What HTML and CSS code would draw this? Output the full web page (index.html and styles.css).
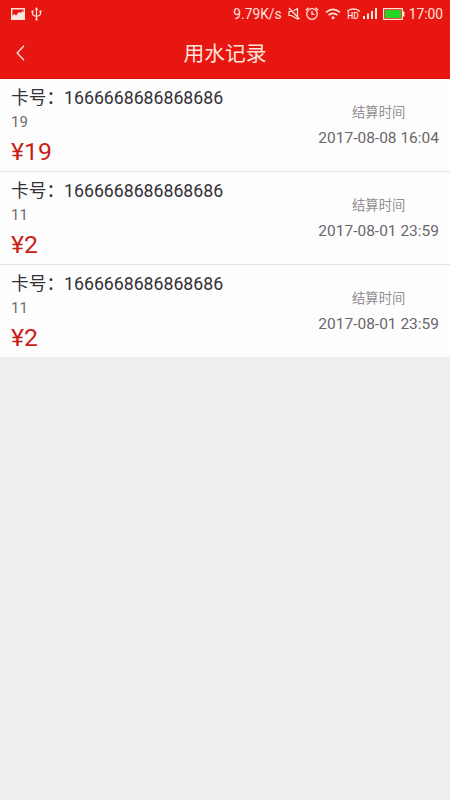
FILE: index.html
```html
<!DOCTYPE html>
<html lang="zh-CN">
<head>
<meta charset="utf-8">
<meta name="viewport" content="width=device-width, initial-scale=1">
<title>用水记录</title>
<link rel="stylesheet" href="styles.css">
</head>
<body>
<header class="top">
  <div class="status">
    <svg class="i-photo" width="14" height="12" viewBox="0 0 14 12"><path d="M.7.7h12.6v10.6H.7z" fill="none" stroke="currentColor" stroke-width="1.4"/><path d="M1 11V8l2.500-2 1.500 1.500 3-3.500 1.500 1 2-2L13 4.500V11z" fill="currentColor"/></svg>
    <svg class="i-usb" width="11" height="14" viewBox="0 0 11 14" fill="none" stroke="currentColor" stroke-width="1.200"><path d="M5.500 2v10M1.500 4.500v2.300q0 1.200 1.500 1.700l2.500 1L8 8.500q1.500-.5 1.500-1.700V4.500"/><path d="M5.500 0l1.700 2.700H3.800zM.5 3.500h2v2h-2zM8.500 3.500h2v2h-2zM4.500 11.500h2v2h-2z" fill="currentColor" stroke="none"/></svg>
    <span class="speed">9.79K/s</span>
    <svg class="i-mute" width="12" height="13" viewBox="0 0 12 13" fill="none" stroke="currentColor" stroke-width="1.200"><path d="M3.500 4.500H1v4h2.500L9.500 12V1.500L5.500 3.800M1 1l10.500 11"/></svg>
    <svg class="i-alarm" width="14" height="13" viewBox="0 0 14 13" fill="none" stroke="currentColor" stroke-width="1.300"><circle cx="7" cy="7" r="5.300"/><path d="M7 4v3.300h2.500M.7 3.200L3.500.8M13.300 3.200L10.500.8"/></svg>
    <svg class="i-wifi" width="16" height="12" viewBox="0 0 16 12" fill="none" stroke="currentColor" stroke-width="1.700"><path d="M1 4.300q7-6 14 0M3.500 7.200q4.500-3.800 9 0"/><circle cx="8" cy="9.800" r="1.500" fill="currentColor" stroke="none"/></svg>
    <span class="hd"><svg width="13" height="4" viewBox="0 0 13 4" fill="none" stroke="currentColor" stroke-width="1.400"><path d="M1 4V2.500q5.500-3 11 0V4"/></svg><b>HD</b></span>
    <svg class="i-signal" width="14" height="11" viewBox="0 0 14 11" fill="currentColor"><path d="M0 8h2v3H0zM4 5.500h2V11H4zM8 3h2v8H8zM12 0h2v11h-2z"/></svg>
    <svg class="i-battery" width="22" height="12" viewBox="0 0 22 12"><path d="M.6.6h18.800v10.800H.6z" fill="none" stroke="currentColor" stroke-width="1.200"/><path d="M2 2h16v8H2z" fill="#25d425"/><path d="M20 3.500h1.500v5H20z" fill="currentColor"/></svg>
    <span class="clock">17:00</span>
  </div>
  <div class="nav">
    <svg class="back" width="9" height="16" viewBox="0 0 9 16" fill="none" stroke="currentColor" stroke-width="1.300"><path d="M8 .7L1.200 8 8 15.300"/></svg>
    <h1>用水记录</h1>
  </div>
</header>
<main>
  <section class="row">
    <div class="info"><div class="card">卡号：1666668686868686</div><div class="amount">19</div><div class="price">¥19</div></div>
    <div class="time"><div class="label">结算时间</div><div class="date">2017-08-08 16:04</div></div>
  </section>
  <section class="row">
    <div class="info"><div class="card">卡号：1666668686868686</div><div class="amount">11</div><div class="price">¥2</div></div>
    <div class="time"><div class="label">结算时间</div><div class="date">2017-08-01 23:59</div></div>
  </section>
  <section class="row">
    <div class="info"><div class="card">卡号：1666668686868686</div><div class="amount">11</div><div class="price">¥2</div></div>
    <div class="time"><div class="label">结算时间</div><div class="date">2017-08-01 23:59</div></div>
  </section>
</main>
</body>
</html>
```
FILE: styles.css
```css
* { box-sizing: border-box; }
body {
  margin: 0;
  min-height: 100vh;
  background: #efedf0;
  font-family: Roboto, "Noto Sans CJK SC", sans-serif;
}
.top {
  height: 79px;
  background: #e71611;
  border-bottom: 1px solid #d5120e;
  color: #ffe4dc;
}
.status {
  display: flex;
  align-items: center;
  height: 27px;
  padding: 0 7px 0 11px;
  font-size: 13.8px;
}
.status svg { flex: none; display: block; }
.i-usb { margin-left: 6px; }
.speed { margin-left: auto; }
.i-mute { margin-left: 6px; }
.i-alarm { margin-left: 5px; }
.i-wifi { margin-left: 6px; }
.hd {
  display: flex;
  flex-direction: column;
  align-items: center;
  width: 13px;
  margin-left: 6px;
  font-size: 8.5px;
  line-height: 8px;
}
.hd b { font-weight: 500; }
.i-signal { margin-left: 3px; }
.i-battery { margin-left: 6px; }
.clock { margin-left: 4px; }
.nav {
  display: grid;
  grid-template-columns: 60px 1fr 60px;
  align-items: center;
  height: 51px;
}
.back { margin-left: 16px; }
.nav h1 {
  margin: 2px 0 0;
  font-size: 20.8px;
  font-weight: 400;
  line-height: 30px;
  text-align: center;
}
.row {
  display: flex;
  justify-content: space-between;
  height: 93.2px;
  padding: 0 11px;
  background: #fefdfe;
  border-bottom: 1px solid #e4e3e5;
}
.row:last-child {
  height: 92px;
  border-bottom: 0;
}
.info { padding-top: 6.6px; }
.card {
  font-size: 17.7px;
  line-height: 24px;
  color: #333135;
}
.amount {
  margin-top: 2.4px;
  font-size: 15px;
  line-height: 20px;
  color: #6d6b6e;
}
.price {
  margin-top: 5px;
  font-size: 24.8px;
  line-height: 30px;
  color: #c91d18;
}
.time {
  padding-top: 23.7px;
  text-align: center;
}
.label {
  font-size: 13.3px;
  line-height: 20px;
  color: #929093;
}
.date {
  margin-top: 5px;
  font-size: 15.5px;
  line-height: 20px;
  color: #69676a;
}
```
